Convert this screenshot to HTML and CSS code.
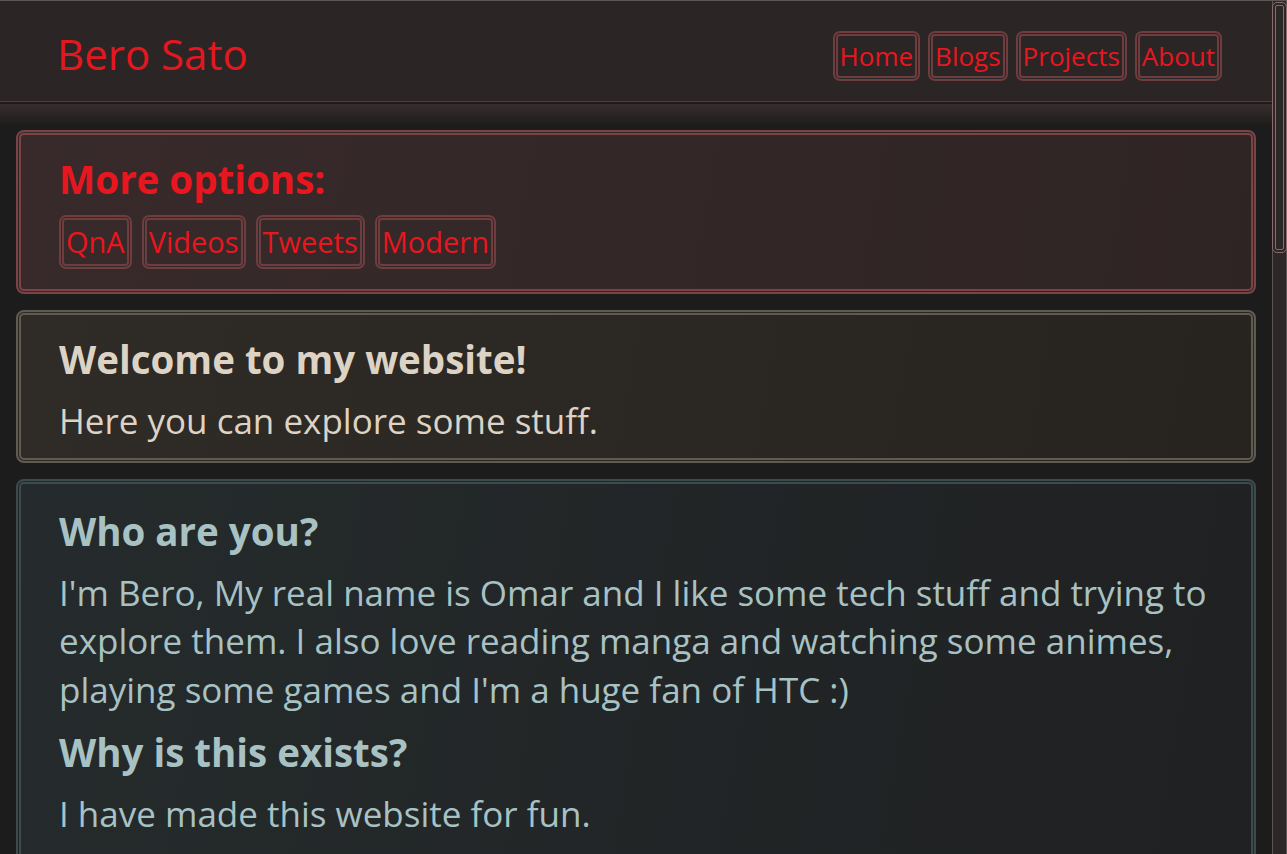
FILE: index.html
```html
<!DOCTYPE html>
<html lang="en">
<head>
<meta charset="utf-8">
<title>Bero Sato</title>
<link rel="stylesheet" href="styles.css">
</head>
<body>
<div class="page">
  <div class="viewport">
    <header class="site-header">
      <h1 class="brand">Bero Sato</h1>
      <nav class="nav">
        <a class="btn" href="#">Home</a>
        <a class="btn" href="#">Blogs</a>
        <a class="btn" href="#">Projects</a>
        <a class="btn" href="#">About</a>
      </nav>
    </header>
    <div class="header-fade"></div>
    <main class="content">
      <section class="panel panel-options">
        <h3 class="panel-title">More options:</h3>
        <div class="options">
          <a class="btn btn-lg" href="#">QnA</a>
          <a class="btn btn-lg" href="#">Videos</a>
          <a class="btn btn-lg" href="#">Tweets</a>
          <a class="btn btn-lg" href="#">Modern</a>
        </div>
      </section>
      <section class="panel panel-welcome">
        <h3 class="panel-title">Welcome to my website!</h3>
        <p class="panel-text">Here you can explore some stuff.</p>
      </section>
      <section class="panel panel-about">
        <h3 class="panel-title">Who are you?</h3>
        <p class="panel-text">I'm Bero, My real name is Omar and I like some tech stuff and trying to explore them. I also love reading manga and watching some animes, playing some games and I'm a huge fan of HTC :)</p>
        <h3 class="panel-title">Why is this exists?</h3>
        <p class="panel-text">I have made this website for fun.</p>
      </section>
    </main>
  </div>
  <div class="scrollbar"><div class="thumb"></div></div>
</div>
</body>
</html>
```
FILE: styles.css
```css
html, body {
  margin: 0;
  height: 100%;
  overflow: hidden;
  background: #1c1c1c;
  font-family: "Open Sans", "Noto Sans", sans-serif;
}

.page {
  display: flex;
  height: 100%;
  box-sizing: border-box;
  border-top: 1px solid #5b5757;
}

.viewport {
  flex: 1;
  min-width: 0;
  overflow: hidden;
}

.site-header {
  display: flex;
  justify-content: space-between;
  align-items: center;
  height: 100px;
  padding: 0 50px 0 57px;
  background: #2c2525;
  border-bottom: 1px solid #4b3f3f;
}

.brand {
  margin: 6px 0 0;
  font-size: 42px;
  font-weight: 400;
  color: #e3171f;
  line-height: 1;
}

.nav {
  display: flex;
  gap: 8px;
  margin-top: 9px;
}

.btn {
  display: block;
  border: 5px double #6e3d3f;
  border-radius: 7px;
  color: #e8161f;
  text-decoration: none;
  font-size: 26px;
  line-height: 40px;
  padding: 0 2px;
}

.header-fade {
  height: 22px;
  margin-top: 2px;
  background: linear-gradient(#382d2d, #1c1c1c);
}

.content {
  display: flex;
  flex-direction: column;
  gap: 16px;
  padding: 4px 16px 0;
}

.panel {
  border: 5px double;
  border-radius: 8px;
  padding: 16px 22px 12px 38px;
}

.panel-title {
  margin: 0 0 10px;
  font-size: 38.5px;
  font-weight: 700;
  line-height: 56px;
}

.panel-text {
  margin: 0 0 10px;
  font-size: 35px;
  line-height: 48.5px;
}

.panel-text:last-child {
  margin-bottom: 0;
}

.panel-options {
  border-color: #7b4345;
  background: linear-gradient(100deg, #382a2a, #2f2424);
  padding-bottom: 20px;
}

.panel-options .panel-title {
  color: #e8161f;
  margin-bottom: 8px;
}

.options {
  display: flex;
  gap: 10px;
}

.btn-lg {
  font-size: 29px;
  line-height: 44px;
}

.panel-welcome {
  border-color: #5f5b50;
  background: linear-gradient(100deg, #2f2b26, #27241f);
  color: #ddd3c5;
}

.panel-about {
  border-color: #3e4b4c;
  background: linear-gradient(100deg, #252b2c, #1f2022);
  color: #a8c2c4;
  min-height: 500px;
  padding-top: 19px;
}

.scrollbar {
  flex: 0 0 15px;
  box-sizing: border-box;
  border-left: 1px solid #5c5555;
  border-right: 1px solid #5c5555;
  background: #2e2727;
  padding: 1px 0;
}

.thumb {
  height: 251px;
  box-sizing: border-box;
  border: 4px double #8d6a6b;
  border-radius: 5px;
  background: #2e2727;
  margin: 0 -1px;
}
```
